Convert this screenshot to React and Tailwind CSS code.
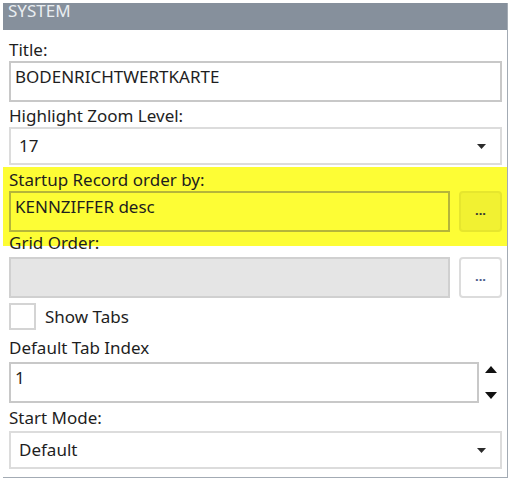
import React from "react";

const font = { fontFamily: '"Noto Sans", "Open Sans", sans-serif' };

function Label({ children, className = "" }) {
  return (
    <div className={`h-[20px] leading-[20px] text-[17px] text-[#1e1e1e] whitespace-nowrap ${className}`}>{children}</div>
  );
}

function Caret() {
  return (
    <svg width="9" height="5" viewBox="0 0 9 5" className="mr-[14px]">
      <path d="M0 0 L9 0 L4.5 5 Z" fill="#2b2b2b" />
    </svg>
  );
}

function Select({ value }) {
  return (
    <div className="h-[38px] border-2 border-[#dcdcdc] bg-white flex items-center justify-between">
      <span className="pl-[8px] text-[17px] text-[#1e1e1e]">{value}</span>
      <Caret />
    </div>
  );
}

export default function App() {
  return (
    <div className="w-[515px] h-[485px] bg-white overflow-hidden" style={font}>
      <div className="ml-[3px] mt-[3px] w-[505px] h-[475px] border-r border-b border-[#a3abb4] flex flex-col">
        <div className="h-[27px] bg-[#86909c] text-[#e9edf1] text-[17px] leading-[20px] pl-[5px] flex items-start">
          <span className="-mt-[2px]">SYSTEM</span>
        </div>
        <div className="pl-[6px] pr-[5px] flex flex-col">
          <Label className="mt-[10px]">Title:</Label>
          <div className="mt-[1px] h-[41px] border-2 border-[#c8c8c8] bg-white text-[17px] text-[#1e1e1e] pl-[4px] pt-[4px] leading-[20px]">
            BODENRICHTWERTKARTE
          </div>
          <Label className="mt-[4px]">Highlight Zoom Level:</Label>
          <div className="mt-[1px]">
            <Select value="17" />
          </div>
        </div>
        <div className="mt-[2px] h-[79px] bg-[#fdfd35] pl-[6px] pr-[1px] flex flex-col">
          <Label className="mt-[3px]">Startup Record order by:</Label>
          <div className="mt-[1px] flex gap-[9px] pr-[4px]">
            <div className="flex-1 h-[41px] border-2 border-[#b5b53a] text-[17px] text-[#1e1e1e] pl-[4px] pt-[4px] leading-[20px]">
              KENNZIFFER desc
            </div>
            <div className="w-[43px] h-[41px] rounded-[4px] border-2 border-[#e6e62e] bg-[#f1f132] flex items-center justify-center text-[13px] font-bold text-[#333] leading-none pb-[2px]">
              ...
            </div>
          </div>
        </div>
        <div className="pl-[6px] pr-[5px] flex flex-col">
          <Label className="-mt-[13px]">Grid Order:</Label>
          <div className="mt-[4px] flex gap-[9px]">
            <div className="flex-1 h-[41px] border-2 border-[#d0d0d0] bg-[#e5e5e5]" />
            <div className="w-[43px] h-[41px] rounded-[4px] border-2 border-[#dcdcdc] bg-white flex items-center justify-center text-[13px] font-bold text-[#4a5a8a] leading-none pb-[2px]">
              ...
            </div>
          </div>
          <div className="mt-[5px] h-[27px] flex items-center">
            <div className="w-[27px] h-[27px] border-2 border-[#d4d4d4] bg-white" />
            <span className="ml-[9px] text-[17px] leading-[20px] text-[#1e1e1e]">Show Tabs</span>
          </div>
          <Label className="mt-[8px]">Default Tab Index</Label>
          <div className="mt-[4px] flex">
            <div className="w-[470px] h-[41px] border-2 border-[#c8c8c8] bg-white text-[17px] text-[#1e1e1e] pl-[4px] pt-[4px] leading-[20px]">
              1
            </div>
            <div className="flex-1 flex flex-col items-center justify-between py-[4px]">
              <svg width="12" height="7" viewBox="0 0 12 7"><path d="M0 7 L6 0 L12 7 Z" fill="#111" /></svg>
              <svg width="12" height="7" viewBox="0 0 12 7"><path d="M0 0 L12 0 L6 7 Z" fill="#111" /></svg>
            </div>
          </div>
          <Label className="mt-[5px]">Start Mode:</Label>
          <div className="mt-[3px]">
            <Select value="Default" />
          </div>
        </div>
      </div>
    </div>
  );
}
